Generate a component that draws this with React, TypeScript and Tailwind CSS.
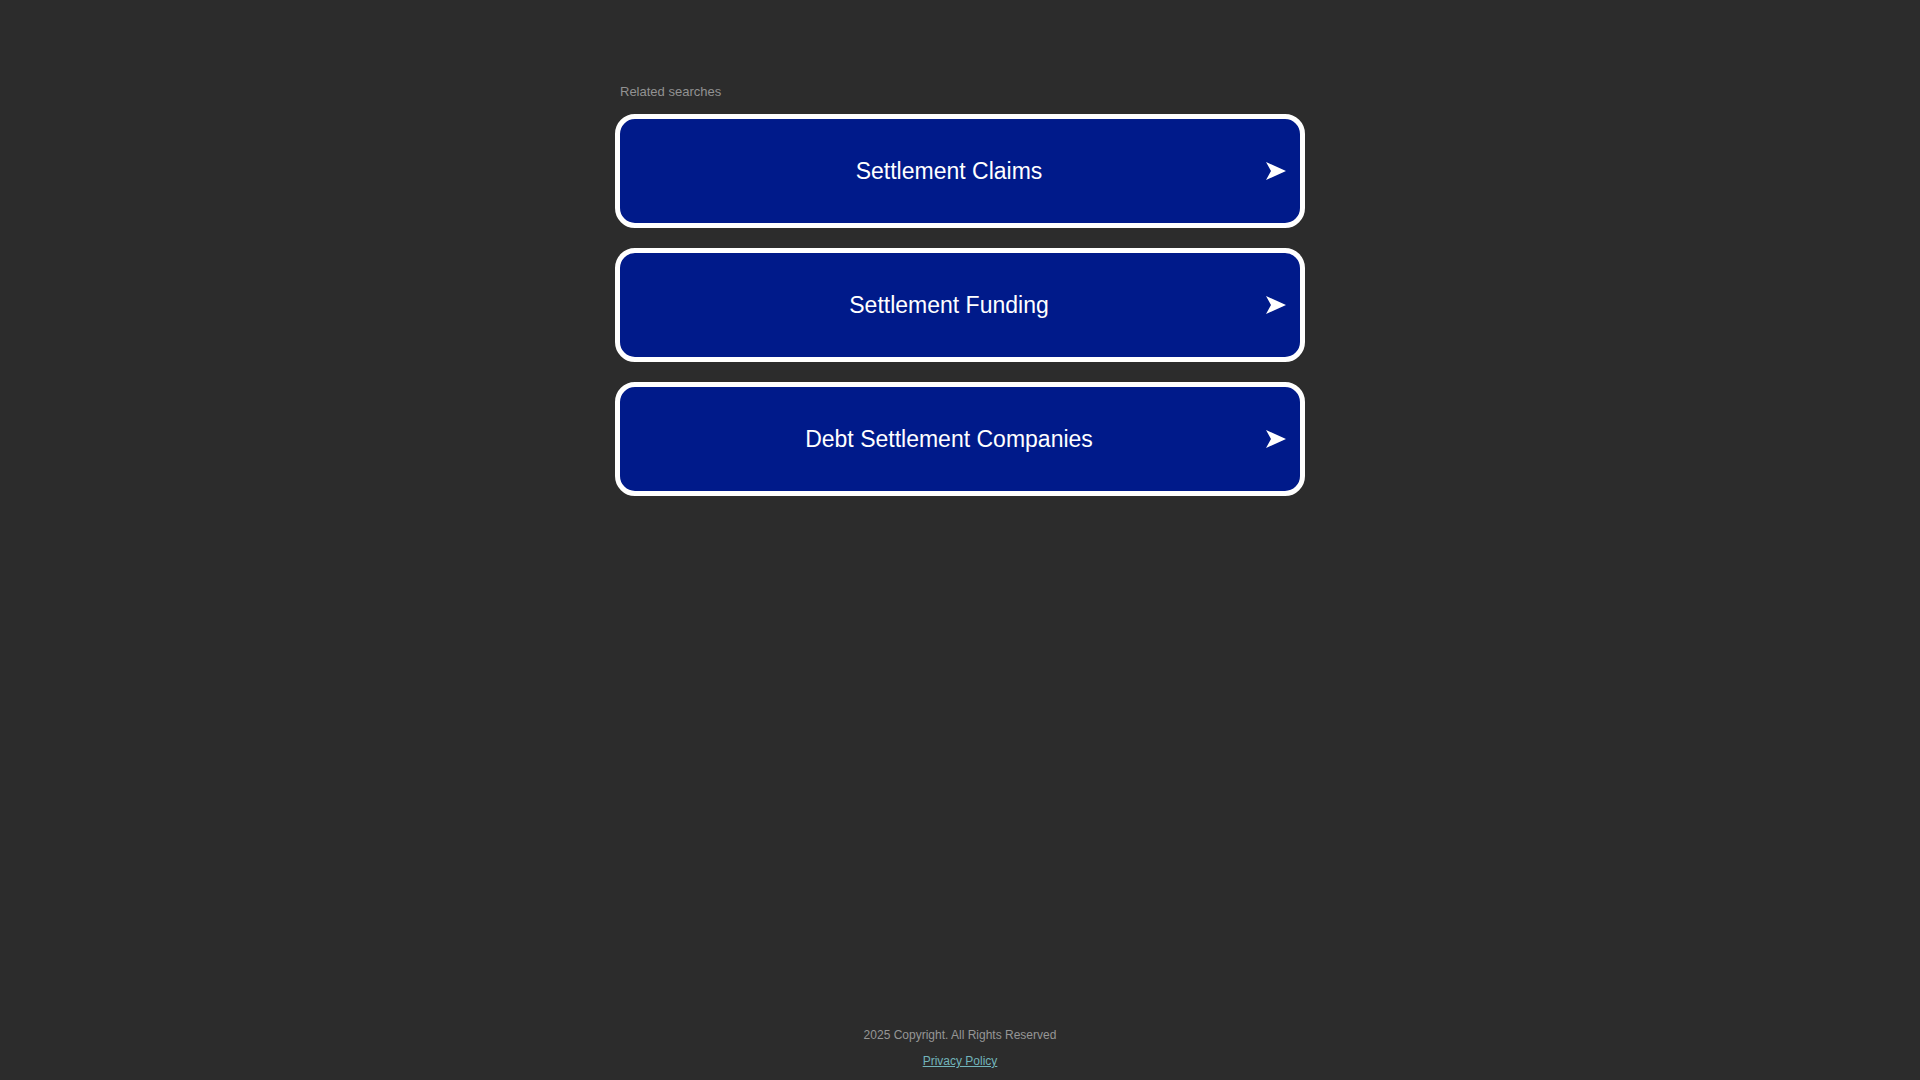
import React from 'react';

const searches = ['Settlement Claims', 'Settlement Funding', 'Debt Settlement Companies'];

const Arrow = () => (
  <svg width="20" height="18" viewBox="0 0 20 18" className="shrink-0">
    <path d="M0 0 L20 9 L0 18 L5 9 Z" fill="#ffffff" />
  </svg>
);

export default function App() {
  return (
    <div
      className="min-h-screen flex flex-col bg-[#2c2c2c]"
      style={{ fontFamily: '"Liberation Sans", Arial, sans-serif' }}
    >
      <main className="w-[690px] mx-auto pt-[84px]">
        <div className="pl-[5px] text-[13px] leading-4 text-[#929292] mb-[14px]">Related searches</div>
        <div className="flex flex-col gap-5">
          {searches.map((s) => (
            <a
              key={s}
              href="#"
              className="h-[114px] flex items-center border-[5px] border-white rounded-[20px] bg-[#001a8a] pl-3 pr-[14px] text-white no-underline"
            >
              <span className="flex-1 text-center text-[23px] leading-7">{s}</span>
              <Arrow />
            </a>
          ))}
        </div>
      </main>
      <footer className="mt-auto flex flex-col items-center pb-3 text-[12px] leading-[14px]">
        <div className="text-[#969696]">2025 Copyright. All Rights Reserved</div>
        <a href="#" className="mt-3 text-[#72b4bb] underline">
          Privacy Policy
        </a>
      </footer>
    </div>
  );
}
